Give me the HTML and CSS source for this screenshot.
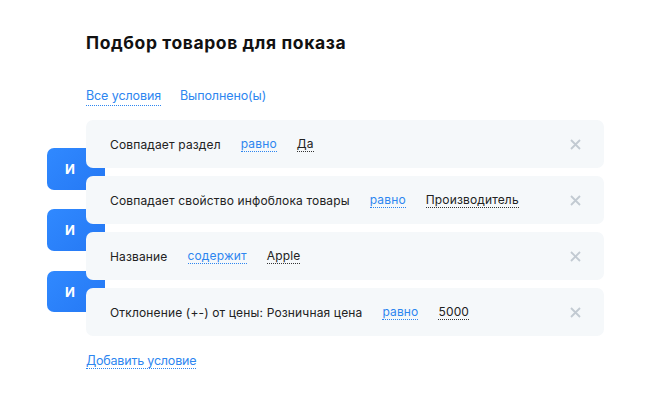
FILE: index.html
```html
<!DOCTYPE html>
<html lang="ru">
<head>
<meta charset="utf-8">
<title>Подбор товаров для показа</title>
<link rel="stylesheet" href="styles.css">
</head>
<body>
<div class="page">
  <h1 class="title">Подбор товаров для показа</h1>
  <div class="tabs">
    <span class="tab active">Все условия</span>
    <span class="tab">Выполнено(ы)</span>
  </div>
  <div class="conditions">
    <div class="row">
      <span class="label">Совпадает раздел</span>
      <span class="op">равно</span>
      <span class="val">Да</span>
      <svg class="close" width="11" height="11" viewBox="0 0 11 11"><path d="M1 1L10 10M10 1L1 10"/></svg>
    </div>
    <div class="row">
      <span class="badge b1">И</span>
      <span class="label">Совпадает свойство инфоблока товары</span>
      <span class="op">равно</span>
      <span class="val">Производитель</span>
      <svg class="close" width="11" height="11" viewBox="0 0 11 11"><path d="M1 1L10 10M10 1L1 10"/></svg>
    </div>
    <div class="row">
      <span class="badge b2">И</span>
      <span class="label">Название</span>
      <span class="op">содержит</span>
      <span class="val">Apple</span>
      <svg class="close" width="11" height="11" viewBox="0 0 11 11"><path d="M1 1L10 10M10 1L1 10"/></svg>
    </div>
    <div class="row">
      <span class="badge b3">И</span>
      <span class="label">Отклонение (+-) от цены: Розничная цена</span>
      <span class="op">равно</span>
      <span class="val">5000</span>
      <svg class="close" width="11" height="11" viewBox="0 0 11 11"><path d="M1 1L10 10M10 1L1 10"/></svg>
    </div>
  </div>
  <div class="add"><span class="add-link">Добавить условие</span></div>
</div>
</body>
</html>
```
FILE: styles.css
```css
html, body {
  margin: 0;
  padding: 0;
  background: #ffffff;
}
body {
  font-family: Inter, "Noto Sans", sans-serif;
  color: #222;
}
.page {
  padding: 30px 51px 0 86px;
}
.title {
  margin: 0;
  font-size: 17.5px;
  font-weight: 700;
  letter-spacing: 0.6px;
  line-height: 26px;
  color: #111;
}
.tabs {
  display: flex;
  gap: 19px;
  margin-top: 32px;
  font-size: 12.5px;
  line-height: 16px;
  letter-spacing: -0.1px;
}
.tab {
  color: #2d86f0;
  padding-bottom: 1px;
}
.tab.active {
  border-bottom: 1px dotted #2d86f0;
}
.conditions {
  position: relative;
  z-index: 0;
  display: flex;
  flex-direction: column;
  gap: 8px;
  margin-top: 14px;
}
.row {
  position: relative;
  display: flex;
  align-items: center;
  gap: 20px;
  height: 48px;
  padding: 0 23px 0 24px;
  background: #f5f8fa;
  border-radius: 7px;
  font-size: 12px;
  letter-spacing: 0.15px;
}
.badge {
  position: absolute;
  z-index: -1;
  left: -39px;
  width: 58px;
  height: 42px;
  box-sizing: border-box;
  padding-right: 12px;
  display: flex;
  align-items: center;
  justify-content: center;
  border-radius: 7px;
  background: linear-gradient(135deg, #3089ff, #2578f4);
  color: #fff;
  font-weight: 700;
  font-size: 13px;
}
.b1 { top: -28px; }
.b2 { top: -23px; }
.b3 { top: -17px; height: 41px; }
.label {
  color: #222;
}
.op {
  color: #2d86f0;
  border-bottom: 1px dotted #2d86f0;
  line-height: 15px;
}
.val {
  color: #222;
  border-bottom: 1px dotted #333;
  line-height: 15px;
}
.close {
  margin-left: auto;
  fill: none;
  stroke: #c2cad2;
  stroke-width: 1.8;
}
.add {
  margin-top: 17px;
  font-size: 12.5px;
  line-height: 16px;
  letter-spacing: -0.2px;
}
.add-link {
  color: #2d86f0;
  border-bottom: 1px dotted #2d86f0;
}
```
